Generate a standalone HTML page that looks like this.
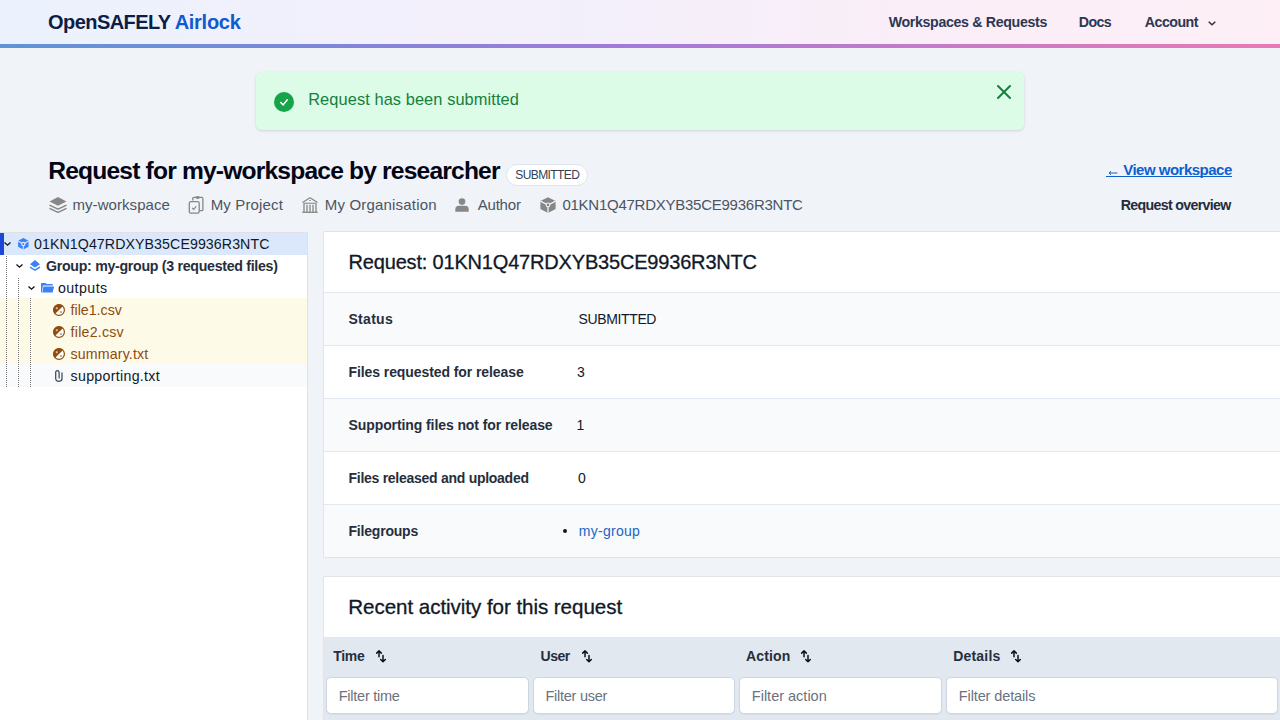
<!DOCTYPE html>
<html><head><meta charset="utf-8">
<style>
*{box-sizing:border-box;margin:0;padding:0}
html,body{width:1280px;height:720px;overflow:hidden}
body{font-family:"Liberation Sans",sans-serif;background:#f0f3f8;color:#0f172a;position:relative}
.a{position:absolute;white-space:nowrap;line-height:1}
svg{position:absolute;overflow:visible}
.b{position:absolute}
.dots{position:absolute;width:1px;background:repeating-linear-gradient(180deg,#787878 0 1px,transparent 1px 2px)}
.inp{position:absolute;top:677px;height:37px;background:#fff;border:1px solid #cdd6e2;border-radius:5px;box-shadow:0 1px 1px rgba(15,23,42,0.05)}
</style></head><body>
<div class="b" style="left:0;top:0;width:1280px;height:44px;background:linear-gradient(90deg,#ebf2fd 0%,#f1f0fc 25%,#f4effa 50%,#fbeef8 75%,#fdeff5 100%)"></div>
<div class="b" style="left:0;top:44px;width:1280px;height:4px;background:linear-gradient(90deg,#5e94d6 0%,#7d86d8 25%,#a47ad9 50%,#c87ac6 75%,#e97ab5 100%)"></div>
<svg style="left:1208px;top:20.5px" width="8" height="5" viewBox="0 0 8 5"><path d="M0.7 0.7 L4 3.8 L7.3 0.7" fill="none" stroke="#333" stroke-width="1.5"/></svg>

<div class="b" style="left:256px;top:72px;width:768px;height:58px;background:#dcfce7;border-radius:6px;box-shadow:0 1px 3px rgba(15,23,42,0.14)"></div>
<svg style="left:274px;top:91.8px" width="20" height="20" viewBox="0 0 20 20"><circle cx="10" cy="10" r="10" fill="#16a34a"/><path d="M6.7 10.5 L9.2 12.9 L13.3 7.8" fill="none" stroke="#fff" stroke-width="1.5" stroke-linecap="round" stroke-linejoin="round"/></svg>
<svg style="left:997px;top:85px" width="14" height="14" viewBox="0 0 14 14"><path d="M1 1 L13 13 M13 1 L1 13" fill="none" stroke="#15803d" stroke-width="2" stroke-linecap="round"/></svg>

<div class="b" style="left:505.6px;top:164px;width:82px;height:22px;border:1px solid #dfe5ee;border-radius:11px;background:#fff"></div>

<svg style="left:49px;top:197px" width="18" height="16" viewBox="0 0 18 16"><path d="M9 0 L17.5 4.4 L9 8.7 L0.5 4.4 Z" fill="#878787"/><path d="M1 8.3 L9 12.2 L17 8.3 M1 11.6 L9 15.4 L17 11.6" fill="none" stroke="#878787" stroke-width="1.5" stroke-linejoin="round" stroke-linecap="round"/></svg>
<svg style="left:188px;top:196px" width="16" height="18" viewBox="0 0 16 18"><path d="M4.8 4.5 V2.6 Q4.8 1.3 6.1 1.3 H13.6 Q14.9 1.3 14.9 2.6 V13.4 Q14.9 14.6 13.6 14.6 H11.3" fill="none" stroke="#878787" stroke-width="1.3"/><path d="M7.8 1.6 Q9.7 -0.6 11.6 1.6 Q9.7 3.2 7.8 1.6Z" fill="none" stroke="#878787" stroke-width="1.1"/><rect x="1.3" y="5.6" width="9.9" height="11.6" rx="1.6" fill="none" stroke="#878787" stroke-width="1.3"/><path d="M4.2 12 L5.7 13.4 L8.2 10.4" fill="none" stroke="#878787" stroke-width="1.2"/></svg>
<svg style="left:302px;top:197px" width="16" height="16" viewBox="0 0 16 16"><path d="M0.5 5.5 L8 0.8 L15.5 5.5" fill="none" stroke="#878787" stroke-width="1.3" stroke-linejoin="round"/><path d="M1.5 6.3 H14.5" stroke="#9a9a9a" stroke-width="1.3"/><path d="M7.2 3.5 H8.8" stroke="#878787" stroke-width="0.9"/><path d="M2 6.5 V15 M14 6.5 V15 M5 7.8 V15 M8 7.8 V15 M11 7.8 V15" stroke="#8e8e8e" stroke-width="1.4"/><path d="M0.3 15.3 H15.7" stroke="#878787" stroke-width="1.3"/></svg>
<svg style="left:455px;top:198px" width="14" height="14" viewBox="0 0 14 14"><circle cx="7" cy="3.6" r="3.3" fill="#878787"/><path d="M0.3 13.8 V11.4 Q0.3 7.8 3.8 7.8 H10.2 Q13.7 7.8 13.7 11.4 V13.8 Z" fill="#878787"/></svg>
<svg style="left:540px;top:197px" width="16" height="16" viewBox="0 0 16 16"><path d="M8 0.2 L15.6 4 V12 L8 15.9 L0.4 12 V4 Z" fill="#878787"/><path d="M0.4 4.2 L8 8 L15.6 4.2 M8 8 V16" fill="none" stroke="#f0f3f8" stroke-width="1.3"/><circle cx="8" cy="7.9" r="2.4" fill="#f0f3f8"/><circle cx="8" cy="7.9" r="1.3" fill="#878787"/></svg>

<svg style="left:1108px;top:169.5px" width="10" height="6" viewBox="0 0 10 6"><path d="M9.4 3 H1 M3 1.2 L1 3 L3 4.8" fill="none" stroke="#0e5fd0" stroke-width="1"/></svg>
<div class="b" style="left:1105.5px;top:176px;width:126.5px;height:1.2px;background:#0e5fd0"></div>

<!-- sidebar -->
<div class="b" style="left:0;top:232px;width:308px;height:490px;background:#fff;border-top:1px solid #dde1e8;border-right:1px solid #dde1e8"></div>
<div class="b" style="left:0;top:233px;width:307px;height:22px;background:#dbe8fc"></div>
<div class="b" style="left:0;top:233px;width:4px;height:22px;background:#1f47d6"></div>
<div class="b" style="left:0;top:298px;width:307px;height:66px;background:#fefae8"></div>
<div class="b" style="left:0;top:364px;width:307px;height:22.5px;background:#f8fafc"></div>
<div class="dots" style="left:6px;top:256px;height:131px"></div>
<div class="dots" style="left:18px;top:278px;height:109px"></div>
<div class="dots" style="left:30px;top:298px;height:89px"></div>
<svg style="left:3.8px;top:241.7px" width="7" height="4" viewBox="0 0 7 4"><path d="M0.5 0.5 L3.5 3.2 L6.5 0.5" fill="none" stroke="#111" stroke-width="1.3"/></svg>
<svg style="left:15.5px;top:263.9px" width="7" height="4" viewBox="0 0 7 4"><path d="M0.5 0.5 L3.5 3.2 L6.5 0.5" fill="none" stroke="#111" stroke-width="1.3"/></svg>
<svg style="left:27.6px;top:285.8px" width="7" height="4" viewBox="0 0 7 4"><path d="M0.5 0.5 L3.5 3.2 L6.5 0.5" fill="none" stroke="#111" stroke-width="1.3"/></svg>
<svg style="left:17.5px;top:238px" width="11" height="11.5" viewBox="0 0 11 11.5"><path d="M5.3 0 L10.6 2.8 V8.8 L5.3 11.4 L0.1 8.8 V2.8 Z" fill="#3b82f6"/><path d="M0 3.1 L5.3 6 L10.7 3.1 M5.3 6 V11.6" fill="none" stroke="#dbe8fc" stroke-width="1.1"/><circle cx="5.3" cy="6" r="2.2" fill="#dbe8fc"/><circle cx="5.3" cy="6" r="1.05" fill="#3b82f6"/></svg>
<svg style="left:30px;top:260px" width="10" height="11" viewBox="0 0 10 11"><path d="M5 0 L10 4.3 L5 7.5 L0 4.3 Z" fill="#3b82f6"/><path d="M0.5 7.3 L5 10.1 L9.5 7.3" fill="none" stroke="#3b82f6" stroke-width="1.4" stroke-linecap="round" stroke-linejoin="round"/></svg>
<svg style="left:41px;top:283px" width="13" height="10" viewBox="0 0 13 10"><path d="M0 0.6 Q0 0 0.6 0 H4.6 L5.6 1 H11.2 Q11.8 1 11.8 1.6 V2.6 H2.4 Q1.9 2.6 1.8 3.1 L0.9 9.6 H0 Z" fill="#3b82f6"/><path d="M2.4 3.4 H12.6 Q13.2 3.4 13 4 L11.6 9.6 H1.4 Z" fill="#3b82f6"/></svg>
<svg style="left:53px;top:304px" width="12" height="12" viewBox="0 0 12 12"><circle cx="6" cy="6" r="5.4" fill="#fff" stroke="#8f4c0c" stroke-width="1.2"/><path d="M1.9 10.1 L10.1 1.9 A5.8 5.8 0 0 0 1.9 10.1Z" fill="#8f4c0c"/><path d="M2.7 4.2 H5 M3.85 3 V5.4" stroke="#e9c9a0" stroke-width="0.9"/><path d="M6.8 8 H9" stroke="#8f4c0c" stroke-width="0.9"/></svg>
<svg style="left:53px;top:326px" width="12" height="12" viewBox="0 0 12 12"><circle cx="6" cy="6" r="5.4" fill="#fff" stroke="#8f4c0c" stroke-width="1.2"/><path d="M1.9 10.1 L10.1 1.9 A5.8 5.8 0 0 0 1.9 10.1Z" fill="#8f4c0c"/><path d="M2.7 4.2 H5 M3.85 3 V5.4" stroke="#e9c9a0" stroke-width="0.9"/><path d="M6.8 8 H9" stroke="#8f4c0c" stroke-width="0.9"/></svg>
<svg style="left:53px;top:348px" width="12" height="12" viewBox="0 0 12 12"><circle cx="6" cy="6" r="5.4" fill="#fff" stroke="#8f4c0c" stroke-width="1.2"/><path d="M1.9 10.1 L10.1 1.9 A5.8 5.8 0 0 0 1.9 10.1Z" fill="#8f4c0c"/><path d="M2.7 4.2 H5 M3.85 3 V5.4" stroke="#e9c9a0" stroke-width="0.9"/><path d="M6.8 8 H9" stroke="#8f4c0c" stroke-width="0.9"/></svg>
<svg style="left:55px;top:370px" width="8" height="12" viewBox="0 0 8 12"><path d="M7 2.6 V8.6 Q7 11.3 4 11.3 Q0.7 11.3 0.7 8.4 V2.6 Q0.7 0.6 2.4 0.6 Q4.1 0.6 4.1 2.6 V8.4" fill="none" stroke="#3d4a5c" stroke-width="1.25"/></svg>

<!-- card 1 -->
<div class="b" style="left:324px;top:232px;width:980px;height:325px;background:#fff;box-shadow:0 0 1px 0 rgba(15,23,42,0.4)"></div>
<div class="b" style="left:324px;top:292px;width:980px;height:53px;background:#f8fafc;border-top:1px solid #e2e8f0"></div>
<div class="b" style="left:324px;top:345px;width:980px;height:53px;background:#fff;border-top:1px solid #e2e8f0"></div>
<div class="b" style="left:324px;top:398px;width:980px;height:53px;background:#f8fafc;border-top:1px solid #e2e8f0"></div>
<div class="b" style="left:324px;top:451px;width:980px;height:53px;background:#fff;border-top:1px solid #e2e8f0"></div>
<div class="b" style="left:324px;top:504px;width:980px;height:53px;background:#f8fafc;border-top:1px solid #e2e8f0"></div>
<div class="b" style="left:563px;top:529px;width:4px;height:4px;border-radius:2px;background:#111827"></div>

<!-- card 2 -->
<div class="b" style="left:324px;top:577px;width:980px;height:200px;background:#fff;box-shadow:0 0 1px 0 rgba(15,23,42,0.4)"></div>
<div class="b" style="left:324px;top:637px;width:980px;height:100px;background:#e2e8f0"></div>
<svg style="left:376px;top:649.5px" width="10" height="13" viewBox="0 0 10 13"><path d="M3 6.8 V2 M0.7 3.1 L3 0.8 L5.3 3.1" fill="none" stroke="#111" stroke-width="1.5" stroke-linecap="round" stroke-linejoin="round"/><path d="M7 5.6 V10.4 M4.7 9.5 L7 11.8 L9.3 9.5" fill="none" stroke="#111" stroke-width="1.5" stroke-linecap="round" stroke-linejoin="round"/></svg>
<svg style="left:582px;top:649.5px" width="10" height="13" viewBox="0 0 10 13"><path d="M3 6.8 V2 M0.7 3.1 L3 0.8 L5.3 3.1" fill="none" stroke="#111" stroke-width="1.5" stroke-linecap="round" stroke-linejoin="round"/><path d="M7 5.6 V10.4 M4.7 9.5 L7 11.8 L9.3 9.5" fill="none" stroke="#111" stroke-width="1.5" stroke-linecap="round" stroke-linejoin="round"/></svg>
<svg style="left:801px;top:649.5px" width="10" height="13" viewBox="0 0 10 13"><path d="M3 6.8 V2 M0.7 3.1 L3 0.8 L5.3 3.1" fill="none" stroke="#111" stroke-width="1.5" stroke-linecap="round" stroke-linejoin="round"/><path d="M7 5.6 V10.4 M4.7 9.5 L7 11.8 L9.3 9.5" fill="none" stroke="#111" stroke-width="1.5" stroke-linecap="round" stroke-linejoin="round"/></svg>
<svg style="left:1011px;top:649.5px" width="10" height="13" viewBox="0 0 10 13"><path d="M3 6.8 V2 M0.7 3.1 L3 0.8 L5.3 3.1" fill="none" stroke="#111" stroke-width="1.5" stroke-linecap="round" stroke-linejoin="round"/><path d="M7 5.6 V10.4 M4.7 9.5 L7 11.8 L9.3 9.5" fill="none" stroke="#111" stroke-width="1.5" stroke-linecap="round" stroke-linejoin="round"/></svg>
<div class="inp" style="left:325.5px;width:203.5px"></div>
<div class="inp" style="left:533px;width:202px"></div>
<div class="inp" style="left:739px;width:203px"></div>
<div class="inp" style="left:945.5px;width:332.5px"></div>

<div class="a" style="left:48.00px;top:12.07px;font-size:20px;font-weight:bold;letter-spacing:-0.556px;color:#0b1e45;">OpenSAFELY</div>
<div class="a" style="left:174.70px;top:12.07px;font-size:20px;font-weight:bold;letter-spacing:-0.283px;color:#0e5bd0;">Airlock</div>
<div class="a" style="left:888.70px;top:14.98px;font-size:14.2px;font-weight:bold;letter-spacing:-0.335px;color:#2c3753;">Workspaces &amp; Requests</div>
<div class="a" style="left:1078.75px;top:14.98px;font-size:14.2px;font-weight:bold;letter-spacing:-0.566px;color:#2c3753;">Docs</div>
<div class="a" style="left:1144.75px;top:14.98px;font-size:14.2px;font-weight:bold;letter-spacing:-0.5px;color:#2c3753;">Account</div>
<div class="a" style="left:308.20px;top:91.11px;font-size:16.4px;letter-spacing:0.08px;color:#15803d;">Request has been submitted</div>
<div class="a" style="left:48.30px;top:159.17px;font-size:24.6px;font-weight:bold;letter-spacing:-0.819px;color:#020617;">Request for my-workspace by researcher</div>
<div class="a" style="left:515.30px;top:169.44px;font-size:12px;letter-spacing:-0.6px;color:#334155;">SUBMITTED</div>
<div class="a" style="left:72.50px;top:197.30px;font-size:15px;letter-spacing:0.064px;color:#4b5563;">my-workspace</div>
<div class="a" style="left:210.70px;top:197.30px;font-size:15px;letter-spacing:0.144px;color:#4b5563;">My Project</div>
<div class="a" style="left:324.80px;top:197.30px;font-size:15px;letter-spacing:0.179px;color:#4b5563;">My Organisation</div>
<div class="a" style="left:477.70px;top:197.30px;font-size:15px;letter-spacing:-0.2px;color:#4b5563;">Author</div>
<div class="a" style="left:562.40px;top:197.30px;font-size:15px;letter-spacing:-0.252px;color:#4b5563;">01KN1Q47RDXYB35CE9936R3NTC</div>
<div class="a" style="left:1123.20px;top:162.30px;font-size:15px;font-weight:bold;letter-spacing:-0.5px;color:#0e5fd0;">View workspace</div>
<div class="a" style="left:1120.80px;top:197.98px;font-size:14.2px;font-weight:bold;letter-spacing:-0.673px;color:#242c3c;">Request overview</div>
<div class="a" style="left:34.00px;top:236.98px;font-size:14.2px;letter-spacing:0.08px;color:#111827;">01KN1Q47RDXYB35CE9936R3NTC</div>
<div class="a" style="left:46.00px;top:258.98px;font-size:14.2px;font-weight:bold;letter-spacing:-0.297px;color:#262e3c;">Group: my-group (3 requested files)</div>
<div class="a" style="left:57.90px;top:280.98px;font-size:14.2px;letter-spacing:0.45px;color:#111827;">outputs</div>
<div class="a" style="left:70.60px;top:302.98px;font-size:14.2px;letter-spacing:0px;color:#8f4c0c;">file1.csv</div>
<div class="a" style="left:70.60px;top:324.98px;font-size:14.2px;letter-spacing:0.225px;color:#8f4c0c;">file2.csv</div>
<div class="a" style="left:70.60px;top:346.98px;font-size:14.2px;letter-spacing:0.14px;color:#8f4c0c;">summary.txt</div>
<div class="a" style="left:70.60px;top:368.98px;font-size:14.2px;letter-spacing:0.3px;color:#111827;">supporting.txt</div>
<div class="a" style="left:348.60px;top:252.07px;font-size:20px;letter-spacing:-0.182px;color:#111827;-webkit-text-stroke:0.3px #111827;">Request: 01KN1Q47RDXYB35CE9936R3NTC</div>
<div class="a" style="left:348.50px;top:312.15px;font-size:14px;font-weight:bold;letter-spacing:0.28px;color:#262e3c;">Status</div>
<div class="a" style="left:578.60px;top:312.15px;font-size:14px;letter-spacing:-0.375px;color:#111827;">SUBMITTED</div>
<div class="a" style="left:348.50px;top:365.15px;font-size:14px;font-weight:bold;letter-spacing:-0.083px;color:#262e3c;">Files requested for release</div>
<div class="a" style="left:577.10px;top:365.15px;font-size:14px;letter-spacing:0px;color:#111827;">3</div>
<div class="a" style="left:348.50px;top:418.15px;font-size:14px;font-weight:bold;letter-spacing:-0.09px;color:#262e3c;">Supporting files not for release</div>
<div class="a" style="left:576.60px;top:418.15px;font-size:14px;letter-spacing:0px;color:#111827;">1</div>
<div class="a" style="left:348.50px;top:471.15px;font-size:14px;font-weight:bold;letter-spacing:-0.271px;color:#262e3c;">Files released and uploaded</div>
<div class="a" style="left:578.00px;top:471.15px;font-size:14px;letter-spacing:0px;color:#111827;">0</div>
<div class="a" style="left:348.50px;top:524.15px;font-size:14px;font-weight:bold;letter-spacing:-0.2px;color:#262e3c;">Filegroups</div>
<div class="a" style="left:578.75px;top:524.15px;font-size:14px;letter-spacing:0.279px;color:#1d64c4;">my-group</div>
<div class="a" style="left:348.30px;top:596.56px;font-size:20.6px;letter-spacing:-0.065px;color:#111827;-webkit-text-stroke:0.3px #111827;">Recent activity for this request</div>
<div class="a" style="left:333.20px;top:649.15px;font-size:14px;font-weight:bold;letter-spacing:-0.267px;color:#262e3c;">Time</div>
<div class="a" style="left:540.60px;top:649.15px;font-size:14px;font-weight:bold;letter-spacing:-0.533px;color:#262e3c;">User</div>
<div class="a" style="left:745.90px;top:649.15px;font-size:14px;font-weight:bold;letter-spacing:0.18px;color:#262e3c;">Action</div>
<div class="a" style="left:953.20px;top:649.15px;font-size:14px;font-weight:bold;letter-spacing:0.2px;color:#262e3c;">Details</div>
<div class="a" style="left:338.70px;top:688.72px;font-size:14.5px;letter-spacing:-0.24px;color:#6b7280;">Filter time</div>
<div class="a" style="left:545.50px;top:688.72px;font-size:14.5px;letter-spacing:-0.26px;color:#6b7280;">Filter user</div>
<div class="a" style="left:751.80px;top:688.72px;font-size:14.5px;letter-spacing:0px;color:#6b7280;">Filter action</div>
<div class="a" style="left:958.80px;top:688.72px;font-size:14.5px;letter-spacing:-0.115px;color:#6b7280;">Filter details</div>
</body></html>
